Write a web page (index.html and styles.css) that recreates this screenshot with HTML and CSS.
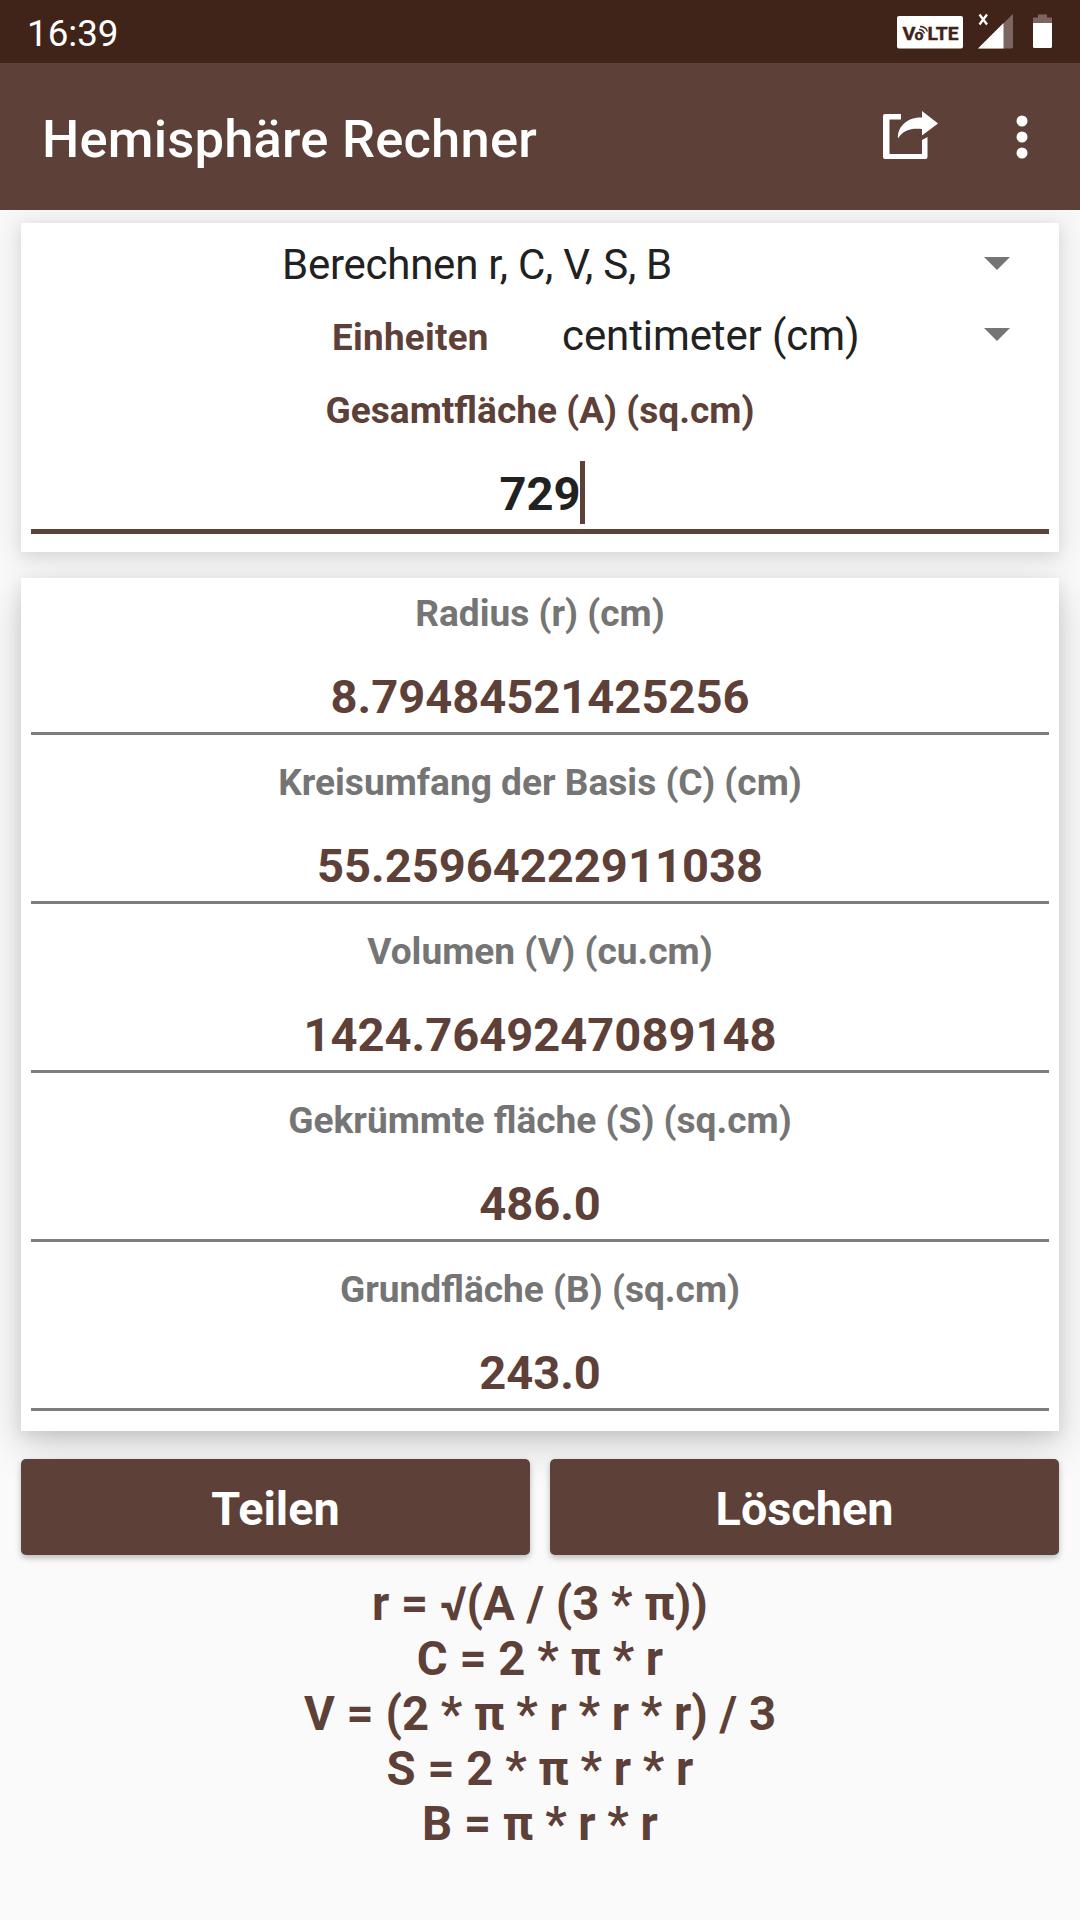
FILE: index.html
```
<!DOCTYPE html>
<html lang="de">
<head>
    <meta charset="UTF-8">
    <meta name="viewport" content="width=device-width, initial-scale=1.0">
    <title>Hemisphäre Rechner</title>
    <link rel="stylesheet" href="styles.css">
</head>
<body>
    <div class="status-bar">
        <span class="time">16:39</span>
        <svg class="status-icons" width="160" height="40" viewBox="0 0 160 40">
            <!-- VoLTE badge -->
            <rect x="1" y="4" width="66" height="32.5" rx="2" fill="#fff"/>
            <g fill="#40241a" stroke="#40241a" stroke-width="0.4" font-weight="bold">
                <text x="6.500" y="28" font-size="19" textLength="13" lengthAdjust="spacingAndGlyphs">V</text>
                <text x="18.500" y="28" font-size="15" textLength="9" lengthAdjust="spacingAndGlyphs">o</text>
                <text x="31.500" y="28" font-size="19" textLength="31" lengthAdjust="spacingAndGlyphs">LTE</text>
            </g>
            <path d="M23 17.500q4 0 5.500 4M24 14.500q5.500 0 7.500 5" fill="none" stroke="#40241a" stroke-width="1.300"/>
            <!-- signal -->
            <path d="M82 36.500L117 2V35q0 1.500-1.500 1.500z" fill="#7d6661"/>
            <path d="M82 36.500L107.500 11V36.500z" fill="#fff"/>
            <path d="M83.500 2.500L91 12.500M91 2.500L83.500 12.500" stroke="#fff" stroke-width="2.300"/>
            <!-- battery -->
            <path d="M137 11V6.500q0-1 1-1h4V2.500h9v3h4q1 0 1 1V11z" fill="#7d6661"/>
            <path d="M137 11h19v23.500q0 1.500-1.500 1.500h-16q-1.500 0-1.500-1.500z" fill="#fff"/>
        </svg>
    </div>

    <header>
        <h1>Hemisphäre Rechner</h1>
        <svg class="share" width="58" height="52" viewBox="0 0 58 52" fill="#fff">
            <path d="M1 6q0-2 2-2h16v5.500H7.500v34.500H40V30l5.500-3v20q0 2-2 2H3q-2 0-2-2z"/>
            <path d="M40 1L56 13.500L40 25.500V19C29 18 21 20 16 28.500C15 18 24 7 40 7.500z"/>
        </svg>
        <svg class="more" width="12" height="44" viewBox="0 0 12 44" fill="#fff">
            <circle cx="6" cy="6" r="5.500"/>
            <circle cx="6" cy="22" r="5.500"/>
            <circle cx="6" cy="38" r="5.500"/>
        </svg>
    </header>

    <main>
        <section class="card inputs">
            <div class="spinner mode">
                <span>Berechnen r, C, V, S, B</span>
                <i class="caret"></i>
            </div>
            <div class="spinner units">
                <b>Einheiten</b>
                <span>centimeter (cm)</span>
                <i class="caret"></i>
            </div>
            <div class="label">Gesamtfläche (A) (sq.cm)</div>
            <div class="field"><span class="number">729<i class="cursor"></i></span></div>
        </section>

        <section class="card results">
            <div class="result">
                <div class="label">Radius (r) (cm)</div>
                <div class="value">8.79484521425256</div>
            </div>
            <div class="result">
                <div class="label">Kreisumfang der Basis (C) (cm)</div>
                <div class="value">55.25964222911038</div>
            </div>
            <div class="result">
                <div class="label">Volumen (V) (cu.cm)</div>
                <div class="value">1424.7649247089148</div>
            </div>
            <div class="result">
                <div class="label">Gekrümmte fläche (S) (sq.cm)</div>
                <div class="value">486.0</div>
            </div>
            <div class="result">
                <div class="label">Grundfläche (B) (sq.cm)</div>
                <div class="value">243.0</div>
            </div>
        </section>

        <div class="buttons">
            <button>Teilen</button>
            <button>Löschen</button>
        </div>

        <div class="formulas">
            <div>r = √(A / (3 * π))</div>
            <div>C = 2 * π * r</div>
            <div>V = (2 * π * r * r * r) / 3</div>
            <div>S = 2 * π * r * r</div>
            <div>B = π * r * r</div>
        </div>
    </main>
</body>
</html>
```
FILE: styles.css
```
* {
    box-sizing: border-box;
}
body {
    font-family: Roboto, sans-serif;
    background: #fafafa;
    color: #212121;
    margin: 0;
    height: 1920px;
    overflow: hidden;
}
.status-bar {
    display: flex;
    justify-content: space-between;
    height: 63px;
    padding: 12px 24px 0 27px;
    background: #40241a;
    color: white;
}
.time {
    font-size: 36.75px;
    line-height: 43px;
}
header {
    position: relative;
    z-index: 1;
    display: flex;
    align-items: center;
    height: 147px;
    padding: 0 52px 0 42px;
    background: #5d4037;
    color: white;
}
h1 {
    margin: 4px auto 0 0;
    font-size: 52.5px;
    font-weight: 500;
    letter-spacing: 0.2px;
}
.share {
    margin: -2px 76px 0 0;
}
main {
    position: relative;
    z-index: 0;
    padding: 13px 21px 0;
}
.card {
    position: relative;
    background: white;
}
/* shadows sit behind both cards so they never fall on each other */
.card::before {
    content: "";
    position: absolute;
    inset: 0;
    z-index: -1;
    box-shadow: 0 2px 30px 8px rgba(0,0,0,0.07), 0 4px 14px rgba(0,0,0,0.09);
}
.inputs {
    height: 329px;
    padding: 5px 10px 0;
    margin-bottom: 26px;
}
.spinner {
    display: flex;
    align-items: center;
    height: 71px;
    padding-right: 39.5px;
    font-size: 42px;
}
.spinner span {
    margin-top: 2px;
}
.mode {
    padding-left: 251px;
    letter-spacing: -0.25px;
}
.units {
    padding-left: 301px;
    letter-spacing: -0.1px;
}
.units b {
    width: 230px;
    margin-top: 6px;
    font-size: 36.75px;
    letter-spacing: 0.3px;
    color: #5d4037;
}
.caret {
    margin-left: auto;
    border: 13px solid transparent;
    border-top-color: #757575;
    border-bottom: 0;
}
.label {
    font-size: 37.1px;
    font-weight: bold;
    line-height: 43px;
    text-align: center;
    color: #757575;
}
.inputs .label {
    margin-top: 19px;
    color: #5d4037;
}
.field {
    height: 102px;
    padding-top: 27px;
    border-bottom: 5px solid #5d4037;
    text-align: center;
    font-size: 47.1px;
    font-weight: bold;
    line-height: 70px;
}
.number {
    position: relative;
}
.cursor {
    position: absolute;
    right: -4px;
    top: -5px;
    width: 5px;
    height: 63px;
    background: #5d4037;
}
.results {
    height: 853px;
    padding: 0 10px;
    margin-bottom: 28px;
}
.results::before {
    box-shadow: 0 14px 38px rgba(0,0,0,0.18), 0 4px 14px rgba(0,0,0,0.09);
}
.result {
    height: 169px;
    padding-top: 26px;
    border-bottom: 3px solid #7d7d7d;
}
.result:first-child {
    height: 157px;
    padding-top: 14px;
}
.value {
    margin-top: 27px;
    font-size: 47.1px;
    font-weight: bold;
    line-height: 70px;
    text-align: center;
    color: #5d4037;
}
.buttons {
    display: flex;
    gap: 20px;
}
button {
    flex: 1;
    height: 96px;
    padding: 4px 0 0;
    border: 0;
    border-radius: 5px;
    background: #5d4037;
    color: white;
    font: bold 46.8px Roboto, sans-serif;
    box-shadow: 0 3px 6px rgba(0,0,0,0.25);
}
.formulas {
    margin-top: 22px;
    font-size: 47.25px;
    font-weight: bold;
    line-height: 55px;
    text-align: center;
    color: #5d4037;
}
```
